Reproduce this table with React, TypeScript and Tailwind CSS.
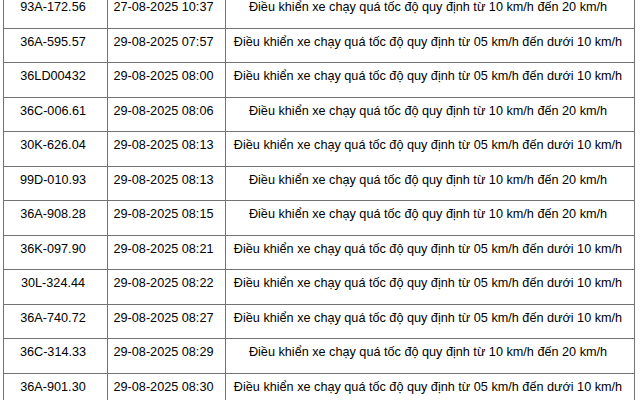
const A = 'Điều khiển xe chạy quá tốc độ quy định từ 10 km/h đến 20 km/h';
const B = 'Điều khiển xe chạy quá tốc độ quy định từ 05 km/h đến dưới 10 km/h';

const rows: [string, string, string][] = [
  ['93A-172.56', '27-08-2025 10:37', A],
  ['36A-595.57', '29-08-2025 07:57', B],
  ['36LD00432', '29-08-2025 08:00', B],
  ['36C-006.61', '29-08-2025 08:06', A],
  ['30K-626.04', '29-08-2025 08:13', B],
  ['99D-010.93', '29-08-2025 08:13', A],
  ['36A-908.28', '29-08-2025 08:15', A],
  ['36K-097.90', '29-08-2025 08:21', B],
  ['30L-324.44', '29-08-2025 08:22', B],
  ['36A-740.72', '29-08-2025 08:27', B],
  ['36C-314.33', '29-08-2025 08:29', A],
  ['36A-901.30', '29-08-2025 08:30', B],
];

export default function App() {
  return (
    <div className="w-[640px] h-[400px] overflow-hidden bg-white pl-[3px] font-['Liberation_Sans',Arial,sans-serif] text-[12.67px] text-black">
      <table className="-mt-[7px] border-collapse table-fixed w-[631px]">
        <colgroup>
          <col className="w-[104px]" />
          <col className="w-[118px]" />
          <col className="w-[409px]" />
        </colgroup>
        <tbody>
          {rows.map(([plate, time, desc], i) => (
            <tr key={i} className="h-[34.5px]">
              <td className="border border-[#737373] align-top text-center pt-[6px] pr-[5px] leading-[1.15]">{plate}</td>
              <td className="border border-[#737373] align-top text-center pt-[6px] pr-[6px] leading-[1.15]">{time}</td>
              <td className="border border-[#737373] align-top text-center pt-[6px] pr-[4px] leading-[1.15]">{desc}</td>
            </tr>
          ))}
        </tbody>
      </table>
    </div>
  );
}
